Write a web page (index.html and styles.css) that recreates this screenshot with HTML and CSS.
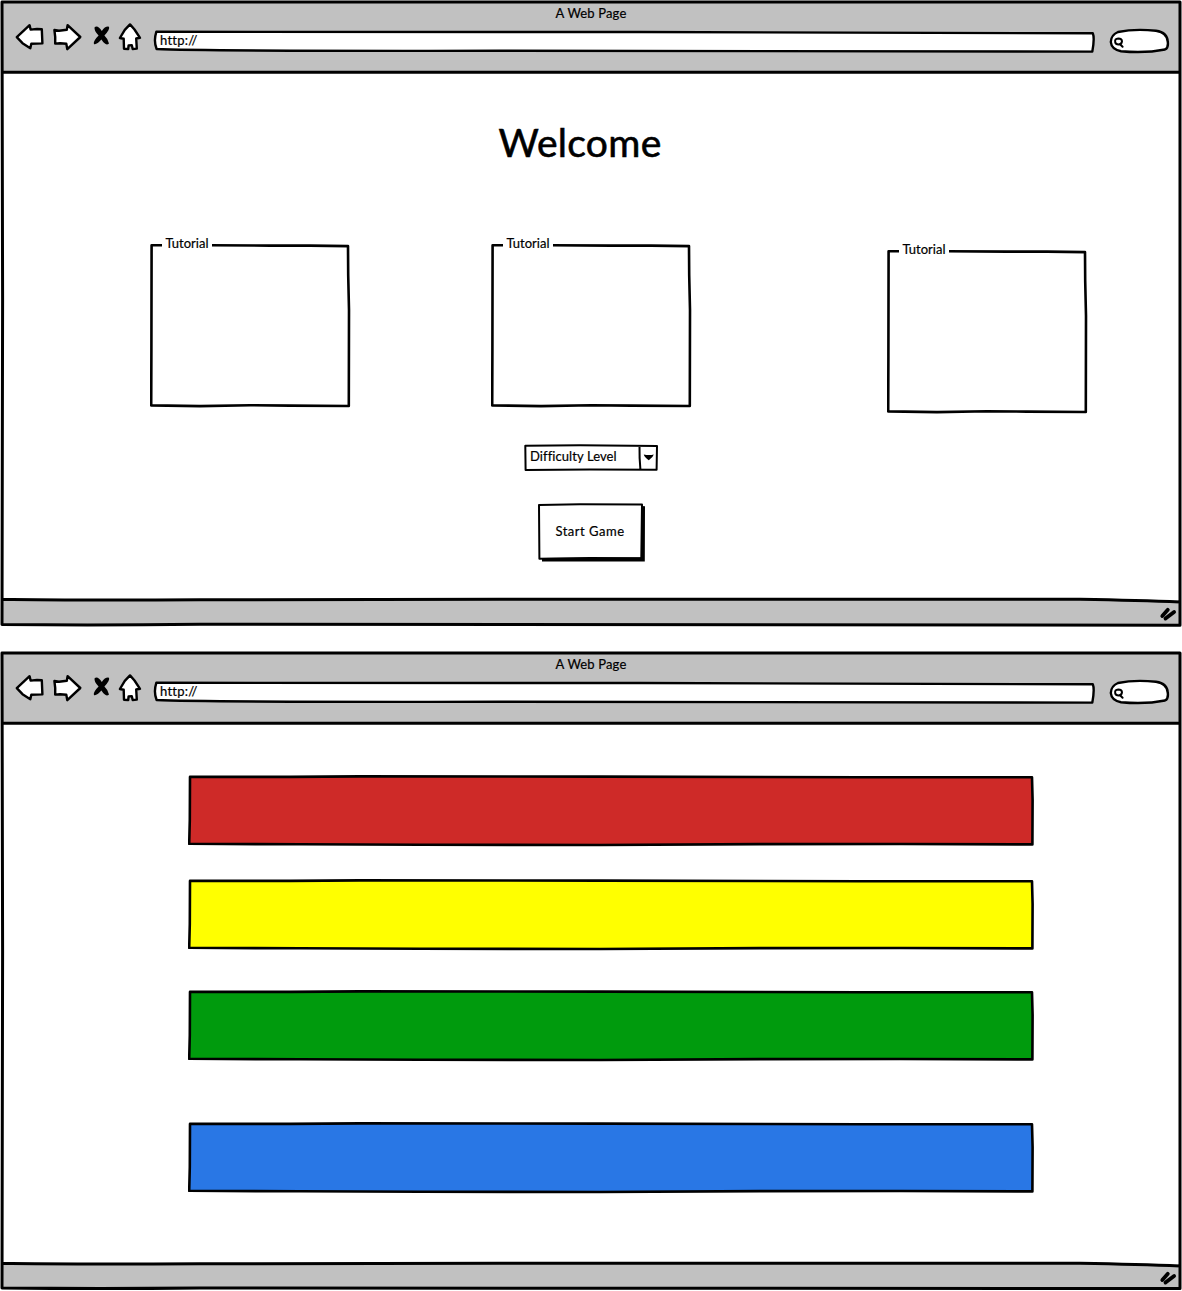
FILE: index.html
```html
<!DOCTYPE html>
<html lang="en">
<head>
<meta charset="utf-8">
<title>A Web Page</title>
<link rel="stylesheet" href="styles.css">
</head>
<body>
<svg class="defs" aria-hidden="true">
  <symbol id="back" viewBox="14 22 31 30"><path class="ink" d="M16.8 37.2L29.6 25.2L30.6 29.6L37 29L41.8 29.2L42.4 43.4L31.3 43.8L30.3 48.2L22.5 43.2Z"/></symbol>
  <symbol id="forward" viewBox="52 22 31 30"><path class="ink" d="M54.4 30L59 30.7L66.8 29.8L67.6 25.2L80.3 37L67.3 49.2L66.3 43.8L60 43.2L55.2 43.6Q55.6 37 54.4 30Z"/></symbol>
  <symbol id="stop" viewBox="92 22 19 30"><path class="solid" d="M94.7 27Q98 24.8 101.8 31Q105.2 25.9 109 26.7Q110.2 29.2 104.4 35.5Q108 38.8 109 43.5Q105.7 46.5 101.4 39.6Q96.3 45.3 93.9 44Q93 41 98.6 35.5Q93.6 30.4 94.7 27Z"/></symbol>
  <symbol id="home" viewBox="118 22 24 30"><path class="ink" d="M130 24.4L134.5 29.5L140 37.8L136.2 38.5L136.8 48.6L132.7 49L131.8 45.2L128.6 45.4L128.2 49L124 48.8L123.7 38.7L119.9 38L124.8 29.8Z"/></symbol>
  <symbol id="address" viewBox="153 22 944 32"><path class="line white" d="M156.3 31.8Q400 31.2 640 32T1092.8 33.3Q1094.8 38 1092.3 51.6Q800 50.5 500 50.8T156.6 49Q153.4 41 156.3 31.8Z"/></symbol>
  <symbol id="search" viewBox="1108 22 63 32"><path class="line white" d="M1118 32Q1135 28.5 1156 30.8Q1167.5 32.5 1167.8 42Q1168.5 48 1165 49.5Q1145 53.5 1121 51.2Q1111.5 49.5 1110.8 42Q1111 35 1118 32Z"/><path class="lens" d="M1115.2 42.2Q1114.6 38.6 1118.2 38.4Q1122 38.4 1122 41.4Q1121.6 44.4 1118.6 44.4Q1115.6 44.4 1115.2 42.2ZM1120 44.2L1122.6 46.8"/></symbol>
  <symbol id="grip" viewBox="1158 605 20 18"><path class="mark" d="M1162.3 616L1167.8 609.8M1165.5 618.6L1174.1 611.9"/></symbol>
  <symbol id="panel" viewBox="150 243 201 165"><path class="line" d="M151.6 245.3L210 245.2L270 245.6L310 245.6L348 246.1L348.2 275L349 310L348.8 406L290 405.6L250 405.2L200 406.1L151.2 405.4L151.4 350Z"/></symbol>
  <symbol id="bar" viewBox="188 775 847 73"><path class="line" d="M190 776.9L290 776.9L360 776.4L600 776.6L860 777.2L1032 777.2L1032.6 800L1032.4 844.4L900 844L760 844.1L600 845L420 844.8L300 844.3L189.2 843.8L189.8 820Z"/></symbol>
</svg>

<section class="window first">
  <svg class="frame" viewBox="0 0 1182 628">
    <path class="chrome" d="M2 2H1180V72H2ZM2 599L1080 599L1180 602V625H2Z"/>
    <path class="edge" d="M2 2H1180Q1179 250 1180 625.2Q800 624.5 200 624.3Q100 625.6 2 624.6L2.6 300ZM2 72Q240 73.2 480 72.3T1180 72.2M2 599.2Q60 600.4 200 599.8L500 599.2H1080Q1140 600.4 1180 601.9"/>
  </svg>
  <header class="header">
    <div class="title">A Web Page</div>
    <nav class="toolbar">
      <svg width="31" height="30"><use href="#back"/></svg>
      <svg width="31" height="30"><use href="#forward"/></svg>
      <svg width="19" height="30"><use href="#stop"/></svg>
      <svg width="24" height="30"><use href="#home"/></svg>
      <div class="address"><svg class="outline"><use href="#address"/></svg><span>http://</span></div>
      <svg width="63" height="32"><use href="#search"/></svg>
    </nav>
  </header>
  <main class="welcome">
    <h1>Welcome</h1>
    <div class="panels">
      <div class="panel"><svg class="outline"><use href="#panel"/></svg><span class="legend">Tutorial</span></div>
      <div class="panel"><svg class="outline"><use href="#panel"/></svg><span class="legend">Tutorial</span></div>
      <div class="panel lowered"><svg class="outline"><use href="#panel"/></svg><span class="legend">Tutorial</span></div>
    </div>
    <div class="select">
      <svg class="outline" viewBox="524 443 135 29"><path class="thin" d="M525.3 445.8L580 445.2L657 446L656.6 469.8L590 469.5L525.6 469.9ZM639.5 446Q639.3 458 640.4 469.5"/><path class="solid" d="M643.8 454.4Q649 455.6 653.8 454.5Q653 457.4 648.8 460.2Q644.4 457.2 643.8 454.4Z"/></svg>
      <span>Difficulty Level</span>
    </div>
    <div class="button">
      <svg class="outline" viewBox="537 502 110 61"><path class="solid" d="M642 506L645 506.3L644.8 561.5L542 561.5V558L642 557.5Z"/><path class="thin" d="M539 504.9L580 504.3L642 504.5L641.3 558.2L590 558L539.4 558.7Z"/></svg>
      <span>Start Game</span>
    </div>
  </main>
  <footer class="footer"><svg width="20" height="18"><use href="#grip"/></svg></footer>
</section>

<section class="window second">
  <svg class="frame" viewBox="0 0 1182 640">
    <path class="chrome" d="M2 2H1180V72H2ZM2 612L1080 612L1180 615V637H2Z"/>
    <path class="edge" d="M2 2H1180Q1179 250 1180 637.6Q800 637 200 637Q100 638 2 637L2.6 300ZM2 72Q240 73.2 480 72.3T1180 72.2M2 612.3Q60 613.4 200 612.8L500 612.2H1080Q1140 613.4 1180 614.9"/>
  </svg>
  <header class="header">
    <div class="title">A Web Page</div>
    <nav class="toolbar">
      <svg width="31" height="30"><use href="#back"/></svg>
      <svg width="31" height="30"><use href="#forward"/></svg>
      <svg width="19" height="30"><use href="#stop"/></svg>
      <svg width="24" height="30"><use href="#home"/></svg>
      <div class="address"><svg class="outline"><use href="#address"/></svg><span>http://</span></div>
      <svg width="63" height="32"><use href="#search"/></svg>
    </nav>
  </header>
  <main class="bars">
    <svg class="bar red"><use href="#bar"/></svg>
    <svg class="bar yellow"><use href="#bar"/></svg>
    <svg class="bar green"><use href="#bar"/></svg>
    <svg class="bar blue"><use href="#bar"/></svg>
  </main>
  <footer class="footer"><svg width="20" height="18"><use href="#grip"/></svg></footer>
</section>
</body>
</html>
```
FILE: styles.css
```css
* { box-sizing: border-box; }
body {
  margin: 0;
  width: 1182px;
  height: 1291px;
  display: flex;
  flex-direction: column;
  gap: 23px;
  background: #fff;
  color: #000;
  font: 13px/20px Lato, "Open Sans", sans-serif;
  letter-spacing: 0.15px;
  -webkit-text-stroke: 0.2px #000;
  overflow: hidden;
}
svg { display: block; }
.defs { position: absolute; width: 0; height: 0; }

/* Hand-drawn strokes */
.line, .edge, .thin, .ink { stroke: #000; stroke-linejoin: round; }
.line { stroke-width: 2.6; }
.edge { fill: none; stroke-width: 3; }
.thin { fill: none; stroke-width: 2; }
.ink { fill: #fff; stroke-width: 2.4; }
.white { fill: #fff; stroke-width: 2.4; }
.solid { fill: #000; }
.chrome { fill: #c1c1c1; }
.lens { fill: none; stroke: #000; stroke-width: 2; stroke-linecap: round; }
.mark { stroke: #000; stroke-width: 3.8; stroke-linecap: round; }

.window { position: relative; display: flex; flex-direction: column; flex: none; }
.window > * { position: relative; }
.window > .frame { position: absolute; inset: 0; width: 100%; height: 100%; }
.first { height: 628px; }
.second { height: 640px; }

.header { height: 73px; padding-top: 3px; }
.title { height: 19px; text-align: center; }
.toolbar {
  display: grid;
  grid-template-columns: 38px 40px 26px 35px 955px 63px;
  padding-left: 14px;
  height: 32px;
}
.address { position: relative; width: 944px; height: 32px; padding: 8px 0 0 7px; }
.outline { position: absolute; left: 0; top: 0; width: 100%; height: 100%; fill: none; }
.address span, .panel span, .select span, .button span { position: relative; }
.address span { letter-spacing: 0.25px; }

.welcome { flex: 1; display: flex; flex-direction: column; padding-top: 44px; }
h1 {
  margin: 0;
  width: 1160px;
  text-align: center;
  font-weight: 400;
  font-size: 39px;
  line-height: 50px;
  letter-spacing: 0.3px;
  -webkit-text-stroke: 0.6px #000;
}
.panels { display: grid; grid-template-columns: 341px 396px 201px; margin: 76px 0 0 150px; height: 171px; }
.panel { position: relative; width: 201px; height: 165px; padding-left: 12px; }
.lowered { margin-top: 6px; }
.legend { display: block; width: 50px; height: 20px; margin-top: -10px; text-align: center; background: #fff; white-space: nowrap; letter-spacing: 0; }
.select { position: relative; width: 135px; height: 29px; margin: 29px 0 0 524px; padding: 3px 0 0 6px; letter-spacing: 0.08px; }
.button { position: relative; width: 110px; height: 61px; margin: 30px 0 0 537px; padding: 19px 4px 0 0; text-align: center; letter-spacing: 0.5px; }

.bars { flex: 1; display: flex; flex-direction: column; padding: 51px 0 0 188px; }
.bar { width: 847px; height: 73px; }
.red { fill: #ce2a28; }
.yellow { fill: #ff0; margin-top: 31px; }
.green { fill: #009b0d; margin-top: 38px; }
.blue { fill: #2977e5; margin-top: 59px; }

.footer { height: 28px; display: flex; justify-content: flex-end; padding: 5px 4px 0 0; }
.second .footer { padding-top: 6px; }
```
